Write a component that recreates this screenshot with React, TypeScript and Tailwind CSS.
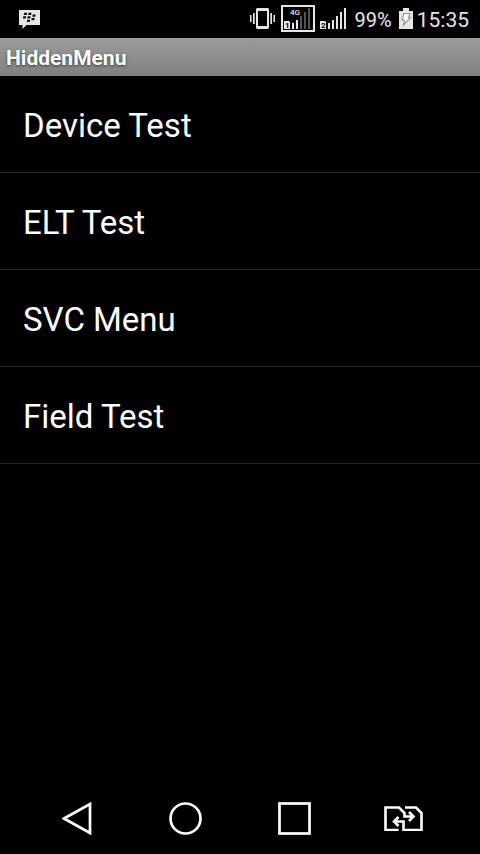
import { useState } from 'react';

const menuItems = ['Device Test', 'ELT Test', 'SVC Menu', 'Field Test'];

function MessengerIcon() {
  return (
    <svg width="21" height="20" viewBox="0 0 21 20" aria-hidden="true">
      <path d="M0 1H21V16H7.5L3.5 20V16H0Z" fill="#e6e6e6" />
      <g fill="#111">
        <path d="M5.2 3.8h3l-.5 2.2h-3zM9.6 3.8h3l-.5 2.2h-3zM4.3 7.2h3l-.5 2.2h-3zM8.7 7.2h3l-.5 2.2h-3zM13.7 5.6h3l-.5 2.2h-3zM12.8 9h3l-.5 2.2h-3zM8.2 10.8h3l-.5 2.2h-3z" />
      </g>
    </svg>
  );
}

function VibrateIcon() {
  return (
    <svg width="25" height="21" viewBox="0 0 25 21" fill="#e6e6e6" aria-hidden="true">
      <path fillRule="evenodd" d="M7 0H18L19 1V20L18 21H7L6 20V1ZM8 3V18H17V3Z" />
      <path d="M0 7h1.5v7H0zM3 5h1.7v11H3zM20.3 5H22v11h-1.7zM23.5 7H25v7h-1.5z" />
    </svg>
  );
}

function SimOneIcon() {
  return (
    <svg width="34" height="27" viewBox="0 0 34 27" role="img" aria-label="SIM 1 signal">
      <rect x="1" y="1" width="32" height="25" fill="none" stroke="#e6e6e6" strokeWidth="2" />
      <path d="M3 16H8L9 17V24H3Z" fill="#e6e6e6" />
      <text x="4" y="23" fontSize="8" fontWeight="700" fill="#000" fontFamily="Roboto, sans-serif">
        1
      </text>
      <text x="9" y="10" fontSize="8" fontWeight="500" fill="#e6e6e6" fontFamily="Roboto, sans-serif">
        4G
      </text>
      <path d="M11 18h2v6h-2zM15 15h2v9h-2z" fill="#e6e6e6" />
      <path d="M19 11h2v13h-2zM23 7h2v17h-2zM27 3h2v21h-2z" fill="#555" />
    </svg>
  );
}

function SimTwoIcon() {
  return (
    <svg width="26" height="21" viewBox="0 0 26 21" role="img" aria-label="SIM 2 signal">
      <path d="M0 13H5L6 14V21H0Z" fill="#e6e6e6" />
      <text x="1" y="20" fontSize="8" fontWeight="700" fill="#000" fontFamily="Roboto, sans-serif">
        2
      </text>
      <path d="M8 15h2v6H8zM12 12h2v9h-2zM16 8h2v13h-2zM20 4h2v17h-2zM24 0h2v21h-2z" fill="#e6e6e6" />
    </svg>
  );
}

function BatteryIcon() {
  return (
    <svg width="14" height="21" viewBox="0 0 14 21" aria-hidden="true">
      <path d="M4 0H10V3H14V21H0V3H4Z" fill="#e6e6e6" />
      <path d="M5 5.5H11L9.5 9.5H11.5L4.5 17L5.5 12H3Z" fill="#fff" stroke="#999" strokeWidth="1.2" />
    </svg>
  );
}

function StatusBar() {
  return (
    <header className="flex h-[38px] items-center justify-between pr-[11px] pb-px pl-[19px] text-[20px] leading-[24px] text-[#e6e6e6]">
      <MessengerIcon />
      <div className="flex items-center">
        <VibrateIcon />
        <div className="mr-[5px] ml-[6px]">
          <SimOneIcon />
        </div>
        <SimTwoIcon />
        <span className="mr-[7px] ml-[9px] pt-[3px]">99%</span>
        <BatteryIcon />
        <time className="ml-1 pt-[3px] text-[21px]">15:35</time>
      </div>
    </header>
  );
}

const iconProps = { fill: 'none', stroke: '#fff', 'aria-hidden': true } as const;

const navButtons = [
  {
    label: 'Back',
    icon: (
      <svg width="30" height="34" viewBox="0 0 30 34" strokeWidth="2.7" {...iconProps}>
        <path d="M28 3V32L2 17.5Z" />
      </svg>
    ),
  },
  {
    label: 'Home',
    icon: (
      <svg width="34" height="34" viewBox="0 0 34 34" strokeWidth="2.7" {...iconProps}>
        <circle cx="16.5" cy="17.5" r="15" />
      </svg>
    ),
  },
  {
    label: 'Recent apps',
    icon: (
      <svg width="34" height="34" viewBox="0 0 34 34" strokeWidth="2.7" {...iconProps}>
        <rect x="1.5" y="2.5" width="30" height="30" />
      </svg>
    ),
  },
  {
    label: 'Switch SIM',
    icon: (
      <svg width="40" height="26" viewBox="0 0 40 26" strokeWidth="2.6" {...iconProps}>
        <path d="M14.5 25H1.5V2.5H15L20.5 8V11.5H29.5M25 7L29.5 11.5L25 16" />
        <path d="M21 2.5H32L37.5 8V25H19.5V16.5H10M14.5 12L10 16.5L14.5 21" />
      </svg>
    ),
  },
];

export default function App() {
  const [selected, setSelected] = useState<string | null>(null);

  return (
    <div className="flex min-h-screen flex-col bg-black font-[Roboto,sans-serif] text-white">
      <StatusBar />

      <h1 className="flex h-[38px] items-center bg-linear-to-b from-[#9c9c9c] to-[#808080] px-1.5 pt-px text-[21px] leading-[24px] font-bold text-white [text-shadow:0_1px_3px_rgba(0,0,0,0.6)]">
        HiddenMenu
      </h1>

      {/* Menu list */}
      <ul className="flex-1">
        {menuItems.map((item) => (
          <li key={item} className="border-b border-[#272727]">
            <button
              onClick={() => setSelected(item)}
              aria-pressed={selected === item}
              className="flex h-24 w-full items-center px-[23px] pt-1 text-left text-[33px] leading-[40px] active:bg-[#222]"
            >
              {item}
            </button>
          </li>
        ))}
      </ul>

      {/* Navigation keys */}
      <nav className="grid h-[72px] grid-cols-4 px-[22px]">
        {navButtons.map(({ label, icon }) => (
          <button key={label} aria-label={label} className="flex items-center justify-center">
            {icon}
          </button>
        ))}
      </nav>
    </div>
  );
}
